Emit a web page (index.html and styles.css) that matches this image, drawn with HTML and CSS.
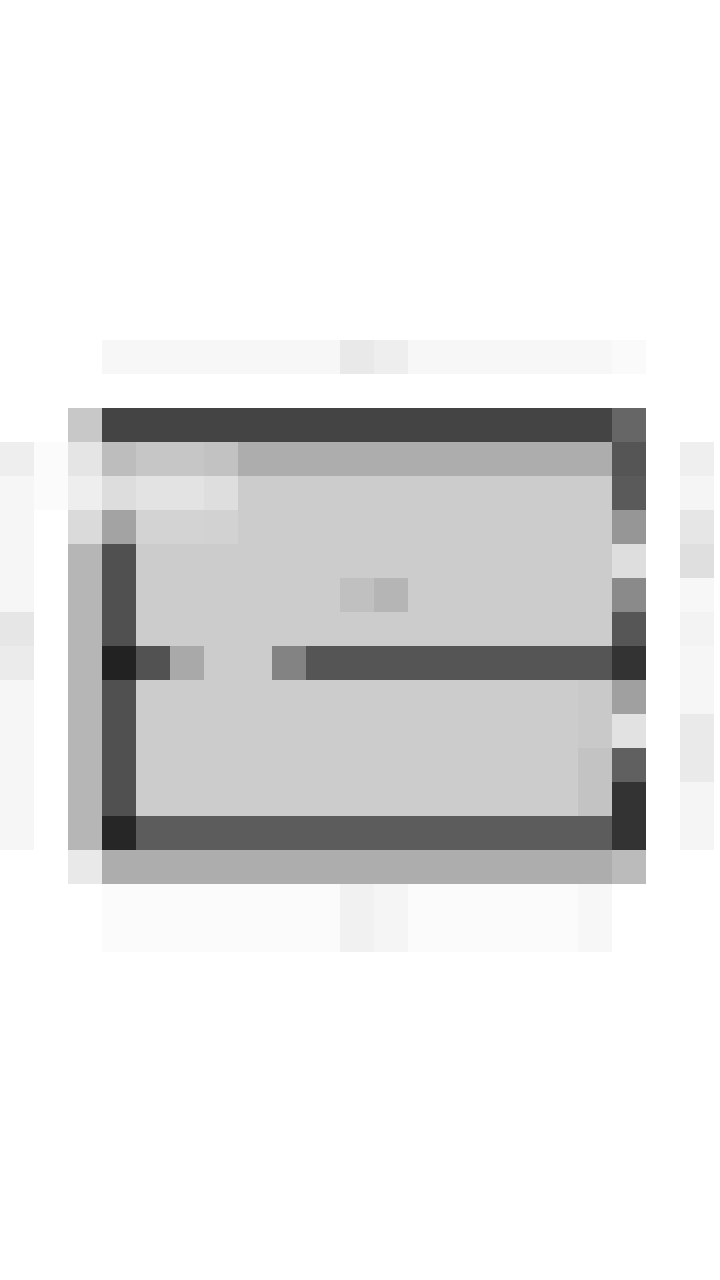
FILE: index.html
```html
<!DOCTYPE html>
<html lang="en">
<head>
<meta charset="utf-8">
<title>Mosaic</title>
<link rel="stylesheet" href="styles.css">
</head>
<body>
<main class="mosaic" aria-label="Pixelated window">
  <!-- top shadow strip -->
  <div class="top-strip"></div>
  <div class="top-strip-a"></div>
  <div class="top-strip-b"></div>
  <div class="top-strip-c"></div>

  <!-- left margin column -->
  <div class="left-edge"></div>
  <div class="left-edge-a"></div>
  <div class="left-edge-b"></div>
  <div class="left-edge-c"></div>
  <div class="left-gap"></div>

  <!-- left frame column -->
  <div class="lframe-a"></div>
  <div class="lframe-b"></div>
  <div class="lframe-c"></div>
  <div class="lframe-d"></div>
  <div class="lframe-e"></div>
  <div class="lframe-f"></div>

  <!-- title bar -->
  <div class="titlebar"></div>
  <div class="titlebar-end"></div>

  <!-- header row -->
  <div class="head-bar"></div>
  <div class="head-a"></div>
  <div class="head-b"></div>
  <div class="head-c"></div>

  <!-- panel body -->
  <div class="panel"></div>
  <div class="panel-a"></div>
  <div class="panel-b"></div>
  <div class="panel-c"></div>
  <div class="panel-d"></div>
  <div class="panel-e"></div>
  <div class="panel-f"></div>
  <div class="panel-mark-a"></div>
  <div class="panel-mark-b"></div>
  <div class="panel-edge-a"></div>
  <div class="panel-edge-b"></div>

  <!-- inner vertical rule -->
  <div class="rule-v"></div>
  <div class="rule-v-a"></div>

  <!-- divider row -->
  <div class="divider"></div>
  <div class="divider-a"></div>
  <div class="divider-b"></div>
  <div class="divider-c"></div>
  <div class="divider-d"></div>

  <!-- bottom bar -->
  <div class="footer"></div>
  <div class="footer-a"></div>
  <div class="base"></div>
  <div class="base-a"></div>
  <div class="base-b"></div>

  <!-- right frame column -->
  <div class="rf r13"></div>
  <div class="rf r14"></div>
  <div class="rf r15"></div>
  <div class="rf r16"></div>
  <div class="rf r17"></div>
  <div class="rf r18"></div>
  <div class="rf r19"></div>
  <div class="rf r20"></div>
  <div class="rf r21"></div>
  <div class="rf r22"></div>
  <div class="rf r23"></div>
  <div class="rf r24"></div>

  <!-- right margin column -->
  <div class="re e13"></div>
  <div class="re e14"></div>
  <div class="re e15"></div>
  <div class="re e16"></div>
  <div class="re e17"></div>
  <div class="re e18"></div>
  <div class="re e19"></div>
  <div class="re e21"></div>
  <div class="re e23"></div>

  <!-- shadow below -->
  <div class="shadow"></div>
  <div class="shadow-a"></div>
  <div class="shadow-b"></div>
  <div class="shadow-c"></div>
</main>
</body>
</html>
```

FILE: styles.css
```css
html, body {
  margin: 0;
  padding: 0;
  background: #ffffff;
  font-family: "Liberation Sans", Arial, sans-serif;
}

.mosaic {
  display: grid;
  grid-template-columns: repeat(21, 34px);
  grid-template-rows: repeat(18, 34px);
  margin-top: 340px;
}

/* top strip (row 1) */
.top-strip   { grid-column: 4 / 19; grid-row: 1; background: #f7f7f7; }
.top-strip-a { grid-column: 11; grid-row: 1; background: #e9e9e9; }
.top-strip-b { grid-column: 12; grid-row: 1; background: #eeeeee; }
.top-strip-c { grid-column: 19; grid-row: 1; background: #fafafa; }

/* left margin column */
.left-edge   { grid-column: 1; grid-row: 5 / 16; background: #f6f6f6; }
.left-edge-a { grid-column: 1; grid-row: 4; background: #eeeeee; }
.left-edge-b { grid-column: 1; grid-row: 9; background: #e6e6e6; }
.left-edge-c { grid-column: 1; grid-row: 10; background: #ebebeb; }
.left-gap    { grid-column: 2; grid-row: 4 / 6; background: #fbfbfb; }

/* left frame column */
.lframe-a { grid-column: 3; grid-row: 3; background: #c8c8c8; }
.lframe-b { grid-column: 3; grid-row: 4; background: #e5e5e5; }
.lframe-c { grid-column: 3; grid-row: 5; background: #eeeeee; }
.lframe-d { grid-column: 3; grid-row: 6; background: #dadada; }
.lframe-e { grid-column: 3; grid-row: 7 / 16; background: #b6b6b6; }
.lframe-f { grid-column: 3; grid-row: 16; background: #e9e9e9; }

/* title bar */
.titlebar     { grid-column: 4 / 19; grid-row: 3; background: #444444; }
.titlebar-end { grid-column: 19; grid-row: 3; background: #666666; }

/* header row */
.head-bar { grid-column: 8 / 19; grid-row: 4; background: #adadad; }
.head-a   { grid-column: 4; grid-row: 4; background: #bdbdbd; }
.head-b   { grid-column: 5 / 7; grid-row: 4; background: #c6c6c6; }
.head-c   { grid-column: 7; grid-row: 4; background: #c2c2c2; }

/* panel */
.panel   { grid-column: 5 / 19; grid-row: 5 / 15; background: #cccccc; }
.panel-a { grid-column: 4; grid-row: 5; background: #dddddd; }
.panel-b { grid-column: 5 / 7; grid-row: 5; background: #e3e3e3; }
.panel-c { grid-column: 7; grid-row: 5; background: #dedede; }
.panel-d { grid-column: 4; grid-row: 6; background: #a3a3a3; }
.panel-e { grid-column: 5 / 7; grid-row: 6; background: #d3d3d3; }
.panel-f { grid-column: 7; grid-row: 6; background: #d2d2d2; }
.panel-mark-a { grid-column: 11; grid-row: 8; background: #c0c0c0; }
.panel-mark-b { grid-column: 12; grid-row: 8; background: #b5b5b5; }
.panel-edge-a { grid-column: 18; grid-row: 11 / 13; background: #c9c9c9; }
.panel-edge-b { grid-column: 18; grid-row: 13 / 15; background: #c3c3c3; }

/* inner vertical rule */
.rule-v   { grid-column: 4; grid-row: 7 / 15; background: #505050; }
.rule-v-a { grid-column: 4; grid-row: 10; background: #222222; }

/* divider row */
.divider   { grid-column: 10 / 19; grid-row: 10; background: #555555; }
.divider-a { grid-column: 5; grid-row: 10; background: #525252; }
.divider-b { grid-column: 6; grid-row: 10; background: #a9a9a9; }
.divider-c { grid-column: 9; grid-row: 10; background: #838383; }
.divider-d { grid-column: 7 / 9; grid-row: 10; background: #cccccc; }

/* footer */
.footer   { grid-column: 5 / 19; grid-row: 15; background: #5c5c5c; }
.footer-a { grid-column: 4; grid-row: 15; background: #262626; }
.base     { grid-column: 4 / 19; grid-row: 16; background: #adadad; }
.base-a   { grid-column: 19; grid-row: 16; background: #bbbbbb; }
.base-b   { grid-column: 1 / 3; grid-row: 16; background: #ffffff; }

/* right frame column */
.rf { grid-column: 19; }
.r13 { grid-row: 4;  background: #555555; }
.r14 { grid-row: 5;  background: #5a5a5a; }
.r15 { grid-row: 6;  background: #969696; }
.r16 { grid-row: 7;  background: #dedede; }
.r17 { grid-row: 8;  background: #8a8a8a; }
.r18 { grid-row: 9;  background: #565656; }
.r19 { grid-row: 10; background: #333333; }
.r20 { grid-row: 11; background: #a0a0a0; }
.r21 { grid-row: 12; background: #e2e2e2; }
.r22 { grid-row: 13; background: #606060; }
.r23 { grid-row: 14; background: #333333; }
.r24 { grid-row: 15; background: #333333; }

/* right margin column */
.re  { grid-column: 21; }
.e13 { grid-row: 4; background: #efefef; }
.e14 { grid-row: 5; background: #f5f5f5; }
.e15 { grid-row: 6; background: #e6e6e6; }
.e16 { grid-row: 7; background: #dfdfdf; }
.e17 { grid-row: 8; background: #f7f7f7; }
.e18 { grid-row: 9; background: #f3f3f3; }
.e19 { grid-row: 10 / 12; background: #f6f6f6; }
.e21 { grid-row: 12 / 14; background: #eaeaea; }
.e23 { grid-row: 14 / 16; background: #f5f5f5; }

/* shadow below */
.shadow   { grid-column: 4 / 19; grid-row: 17 / 19; background: #fbfbfb; }
.shadow-a { grid-column: 11; grid-row: 17 / 19; background: #f1f1f1; }
.shadow-b { grid-column: 12; grid-row: 17 / 19; background: #f5f5f5; }
.shadow-c { grid-column: 18; grid-row: 17 / 19; background: #f7f7f7; }
```
